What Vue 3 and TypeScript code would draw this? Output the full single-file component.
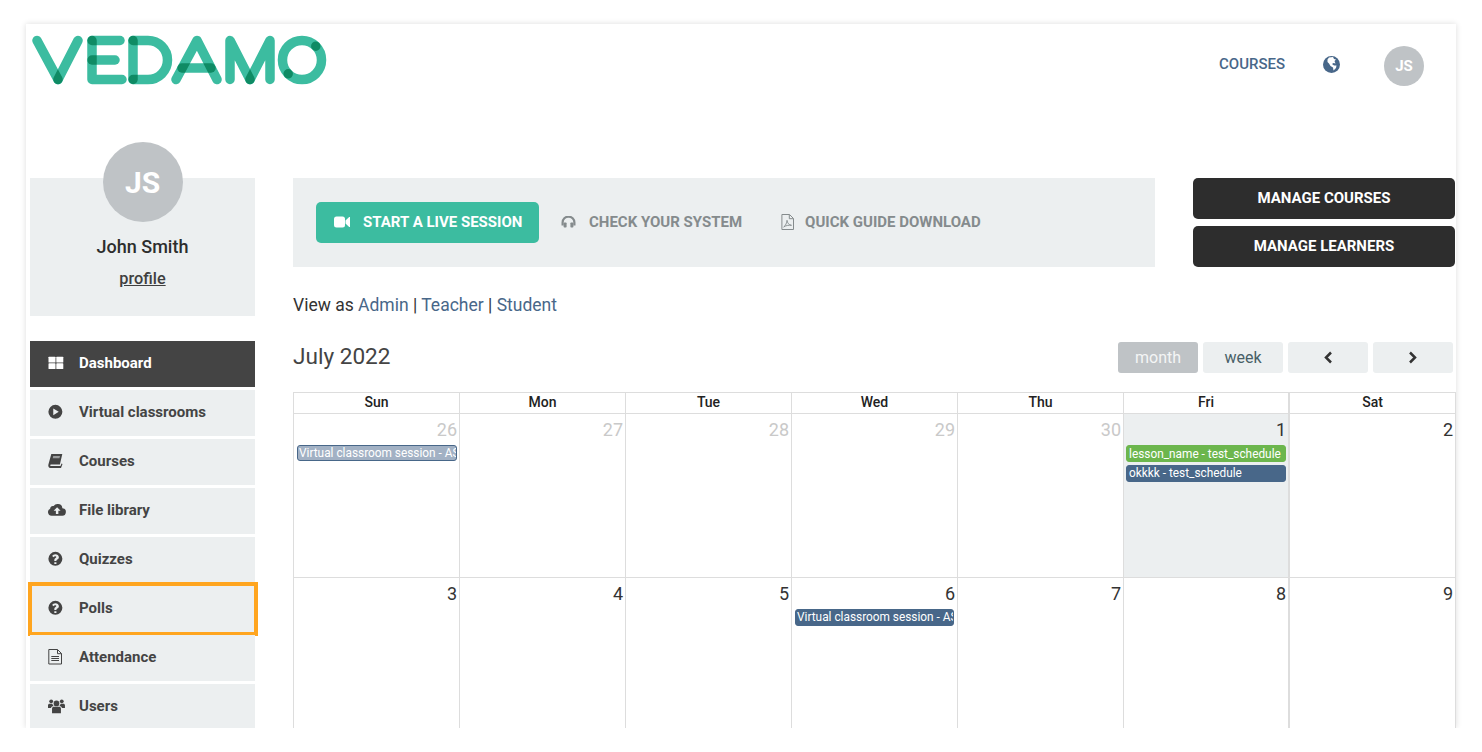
<script setup lang="ts">
interface NavItem { label: string; icon: string; active?: boolean; highlight?: boolean }
interface CalEvent { text: string; kind: string }
interface Day { n: number; muted?: boolean; today?: boolean; events?: CalEvent[] }

const nav: NavItem[] = [
  { label: 'Dashboard', icon: 'grid', active: true },
  { label: 'Virtual classrooms', icon: 'play' },
  { label: 'Courses', icon: 'book' },
  { label: 'File library', icon: 'cloud' },
  { label: 'Quizzes', icon: 'question' },
  { label: 'Polls', icon: 'question', highlight: true },
  { label: 'Attendance', icon: 'file' },
  { label: 'Users', icon: 'users' },
]
const dows = ['Sun', 'Mon', 'Tue', 'Wed', 'Thu', 'Fri', 'Sat']
const days: Day[] = [
  { n: 26, muted: true, events: [{ text: 'Virtual classroom session - ASDF', kind: 'faded long' }] },
  { n: 27, muted: true },
  { n: 28, muted: true },
  { n: 29, muted: true },
  { n: 30, muted: true },
  { n: 1, today: true, events: [
    { text: 'lesson_name - test_schedule', kind: 'green' },
    { text: 'okkkk - test_schedule', kind: 'blue' },
  ] },
  { n: 2 },
  { n: 3 }, { n: 4 }, { n: 5 },
  { n: 6, events: [{ text: 'Virtual classroom session - ASDF', kind: 'blue long' }] },
  { n: 7 }, { n: 8 }, { n: 9 },
]
</script>

<template>
  <div class="frame">
    <header class="top">
      <svg class="logo" width="300" height="56" viewBox="0 0 300 56" fill="none" stroke="#3cbca0" stroke-linecap="round" stroke-linejoin="round" stroke-width="9.5">
        <path d="M5 8.500 L26 47.500" />
        <path d="M46 8.500 L26 47.500" />
        <path d="M60 8.500 V47.500 H90" />
        <path d="M60 8.500 H88" />
        <path d="M60 28 H83" />
        <path d="M101 8.500 V47.500" />
        <path d="M101 8.500 H116 A19.500 19.500 0 0 1 116 47.500 H101" />
        <path d="M144 47.500 L165 8.500 L185 47.500" />
        <path d="M150 36 H179" />
        <path d="M198 47.500 V8.500 L218 47.500" />
        <path d="M218 47.500 L238 8.500 V47.500" />
        <path d="M283.800 14.200 A19.500 19.500 0 0 1 256.200 41.800" />
        <path d="M256.200 41.800 A19.500 19.500 0 0 1 283.800 14.200" />
      </svg>
      <nav class="topnav">
        <a class="courses">COURSES</a>
        <svg class="globe" width="17" height="17" viewBox="0 0 17 17">
          <circle cx="8.5" cy="8.5" r="8.5" fill="#486789" />
          <path d="M6 1.5 L10 .9 L11 3 L13 3.5 L11.5 5 L12.5 7.5 L10.5 7 L9 8 L11 9.5 L13.5 9.5 L13 12 L10.5 14.5 L10 11.5 L7.5 10 L6 7.5 L4.5 6 L4.5 3.5 Z" fill="#fff" />
        </svg>
        <span class="avatar small">JS</span>
      </nav>
    </header>

    <div class="body">
      <aside class="side">
        <section class="profile">
          <span class="avatar big">JS</span>
          <div class="name">John Smith</div>
          <a class="profile-link">profile</a>
        </section>
        <ul class="menu">
          <li v-for="item in nav" :key="item.label" class="menu-item" :class="{ active: item.active, hl: item.highlight }">
            <svg class="mi" width="16" height="16" viewBox="0 0 16 16">
              <g v-if="item.icon === 'grid'" fill="currentColor">
                <rect x="0.5" y="1.700" width="7" height="5.800" rx=".6" />
                <rect x="8.300" y="1.700" width="7" height="5.800" rx=".6" />
                <rect x="0.5" y="8.300" width="7" height="5.800" rx=".6" />
                <rect x="8.300" y="8.300" width="7" height="5.800" rx=".6" />
              </g>
              <path v-else-if="item.icon === 'play'" transform="translate(-1.100 -.4) scale(1.060)" fill="currentColor" fill-rule="evenodd" d="M8 1.2a6.6 6.6 0 1 1 0 13.2A6.6 6.6 0 0 1 8 1.2ZM6 4.7v6.2l5.2-3.1Z" />
              <g v-else-if="item.icon === 'book'">
                <path fill="currentColor" d="M3.300 1H14.300L11.900 11.500H3C2 11.500 1.800 13 3 13H12.500L13.500 10.500 14.500 11 13 15H2.500C.5 15 0 13 .4 11.500Z" />
                <path fill="#9a9c9d" d="M5.200 3H12L11.500 5.300H4.700Z" />
              </g>
              <path v-else-if="item.icon === 'cloud'" transform="translate(-.4 -.8) scale(1.120)" fill="currentColor" fill-rule="evenodd" d="M9.300 2.600a4.100 4.100 0 0 1 3.900 3.600A3.300 3.300 0 0 1 12.600 13H3.500A3.300 3.300 0 0 1 2.300 6.700 2.400 2.400 0 0 1 5.400 4.300 4.100 4.100 0 0 1 9.300 2.600ZM8.500 5.400 5.400 8.600h2v2.900h2.200V8.600h2Z" />
              <path v-else-if="item.icon === 'question'" transform="translate(-1.100 -.4) scale(1.060)" fill="currentColor" fill-rule="evenodd" d="M8 1.200a6.600 6.600 0 1 1 0 13.200A6.600 6.600 0 0 1 8 1.200ZM7 10.900v1.700h2v-1.700ZM8.100 3.500c-1.500 0-2.500.7-3.100 1.700l1.300 1c.4-.5.8-.9 1.500-.9.6 0 1.100.3 1.100.8 0 .4-.3.6-.8.9C7.500 7.500 7 8 7 9v.9h2v-.6c0-.4.3-.6.800-.9.8-.5 1.500-1 1.500-2.200 0-1.700-1.700-2.700-3.200-2.700Z" />
              <g v-else-if="item.icon === 'file'">
                <path fill="none" stroke="currentColor" stroke-width="1" d="M.8 .5H9.500L13.500 4.500V15H.8Z M9.500 .7V4.700H13.500" />
                <path fill="none" stroke="currentColor" stroke-width="1" d="M3.300 7.500H11M3.300 9.500H11M3.300 11.500H11" />
              </g>
              <g v-else fill="currentColor" transform="translate(0 -.6) scale(1.060)">
                <circle cx="8" cy="5.700" r="2.700" />
                <circle cx="3" cy="3.700" r="1.800" />
                <circle cx="13" cy="3.700" r="1.800" />
                <path d="M3.800 15V10.500C3.800 9.300 4.700 8.800 5.600 8.800H10.400C11.300 8.800 12.200 9.300 12.200 10.500V15Z" />
                <path d="M0 10V7.500C0 6.500.7 6 1.500 6H4C4.300 7 4.800 7.600 5.300 8 3.700 8.200 3 9 2.900 10ZM16 10V7.500C16 6.500 15.300 6 14.500 6H12C11.700 7 11.200 7.600 10.700 8 12.300 8.200 13 9 13.100 10Z" />
              </g>
            </svg>
            <span>{{ item.label }}</span>
          </li>
        </ul>
      </aside>

      <main class="main">
        <div class="actions-row">
          <div class="action-bar">
            <button class="start">
              <svg width="16" height="12" viewBox="0 0 16 12" fill="#fff"><rect x="0" y=".5" width="11" height="11" rx="2.500" /><path d="M11.500 4.500 15.200 1H16V11H15.200L11.500 7.500Z" /></svg>
              START A LIVE SESSION
            </button>
            <a class="act check">
              <svg width="15" height="12" viewBox="0 0 15 12" fill="none"><path d="M1.600 9.500V6.500a5.900 5.900 0 0 1 11.800 0v3" stroke="#858b8d" stroke-width="2.200" /><rect x="2.600" y="6.500" width="3" height="5" rx=".8" fill="#858b8d" /><rect x="9.400" y="6.500" width="3" height="5" rx=".8" fill="#858b8d" /></svg>
              CHECK YOUR SYSTEM
            </a>
            <a class="act guide">
              <svg width="13" height="16" viewBox="0 0 13 16" fill="none" stroke="#858b8d"><path d="M.9.500H8.500L12.500 4.500V15.500H.9Z M8.300.700V4.700H12.300" /><path d="M2.700 13C4.500 11.800 6 8.500 6 6.300 6.300 9 8 11 10.500 11.300 8 11 4.500 11.500 2.700 13Z" stroke-width=".9" /></svg>
              QUICK GUIDE DOWNLOAD
            </a>
          </div>
          <div class="manage">
            <button>MANAGE COURSES</button>
            <button>MANAGE LEARNERS</button>
          </div>
        </div>

        <p class="view-as">View as <a>Admin</a> | <a>Teacher</a> | <a>Student</a></p>

        <div class="cal-head">
          <h2>July 2022</h2>
          <div class="cal-btns">
            <button class="on">month</button>
            <button>week</button>
            <button aria-label="previous"><svg width="10" height="13" viewBox="0 0 10 13" fill="none"><path d="M8 1.500 3 6.500 8 11.500" stroke="#333" stroke-width="2.500" /></svg></button>
            <button aria-label="next"><svg width="10" height="13" viewBox="0 0 10 13" fill="none"><path d="M2 1.500 7 6.500 2 11.500" stroke="#333" stroke-width="2.500" /></svg></button>
          </div>
        </div>

        <div class="cal">
          <div v-for="d in dows" :key="d" class="dow">{{ d }}</div>
          <div v-for="(day, i) in days" :key="i" class="cell" :class="{ today: day.today }">
            <div class="num" :class="{ muted: day.muted }">{{ day.n }}</div>
            <div v-for="ev in day.events" :key="ev.text" class="ev" :class="ev.kind">{{ ev.text }}</div>
          </div>
        </div>
      </main>
    </div>
  </div>
</template>

<style>
html, body { background: #fff; overflow: hidden; }
</style>

<style scoped>
* { box-sizing: border-box; }
.frame {
  width: 1430px; height: 704px; margin: 24px 0 0 26px; background: #fff; overflow: hidden;
  box-shadow: 0 0 6px rgba(0, 0, 0, .14);
  font-family: Roboto, "Liberation Sans", sans-serif; color: #333;
}
.top { height: 118px; display: flex; justify-content: space-between; padding: 4px 32px 0 6px; }
.logo { display: block; margin: 4px 0 0 0; isolation: isolate; }
.logo path { mix-blend-mode: multiply; }
.topnav { display: flex; align-items: flex-start; padding-top: 22px; }
.courses { font-size: 15px; font-weight: 500; color: #486789; line-height: 17px; margin-top: 6px; width: 104px; }
.globe { margin-top: 6px; width: 17px; }
.avatar { display: flex; align-items: center; justify-content: center; border-radius: 50%; background: #bfc3c6; color: #fff; font-weight: 700; }
.avatar.small { width: 40px; height: 40px; font-size: 15px; margin: -4px 0 0 44px; }
.avatar.big { width: 80px; height: 80px; font-size: 30px; margin: -36px auto 0; }
.body { display: flex; padding-left: 4px; }
.side { width: 225px; padding-top: 36px; flex: none; }
.profile { background: #eceff0; height: 138px; text-align: center; display: flow-root; }
.name { font-size: 18px; font-weight: 500; line-height: 22px; margin-top: 14px; color: #2d2d2d; }
.profile-link { display: block; font-size: 16.3px; font-weight: 500; line-height: 20px; margin-top: 11px; color: #3f3f3f; text-decoration: underline; }
.menu { list-style: none; margin: 25px 0 0; padding: 0; display: flex; flex-direction: column; gap: 3px; }
.menu-item {
  position: relative; height: 46px; background: #eceff0; display: flex; align-items: center;
  padding: 0 0 3px 18px; font-size: 15px; font-weight: 700; color: #444;
}
.menu-item.active { background: #444; color: #fff; }
.mi { flex: none; margin-right: 15px; overflow: visible; }
.menu-item.hl::after { content: ""; position: absolute; left: -2px; right: -3px; top: -4px; bottom: -4px; border: 4px solid #ffa51f; }
.main { width: 1162px; margin-left: 38px; padding-top: 36px; flex: none; }
.actions-row { display: flex; justify-content: space-between; }
.action-bar { width: 862px; height: 89px; background: #eceff0; display: flex; align-items: center; padding-left: 23px; }
.start {
  width: 223px; height: 41px; border: 0; border-radius: 5px; background: #3cbca0; color: #fff;
  display: flex; align-items: center; gap: 13px; padding: 0 0 2px 18px; font: 700 15px Roboto, sans-serif; white-space: nowrap;
}
.act { display: flex; align-items: center; gap: 13px; font-size: 15px; font-weight: 700; color: #858b8d; white-space: nowrap; padding-bottom: 2px; }
.check { margin-left: 22px; }
.guide { margin-left: 39px; gap: 11px; }
.manage { width: 262px; display: flex; flex-direction: column; gap: 7px; }
.manage button { height: 41px; border: 0; border-radius: 5px; background: #2d2d2d; color: #fff; font: 700 15px Roboto, sans-serif; padding: 0 0 2px; }
.view-as { margin: 27px 0 0; font-size: 17.5px; line-height: 22px; color: #333; }
.view-as a { color: #486789; }
.cal-head { display: flex; justify-content: space-between; align-items: flex-start; margin-top: 26px; width: 1160px; }
.cal-head h2 { margin: 0; font-size: 22.6px; font-weight: 400; line-height: 28px; color: #444; padding-top: 1px; }
.cal-btns { display: flex; gap: 5px; margin-top: 0; }
.cal-btns button { width: 80px; height: 31px; border: 0; border-radius: 3px; background: #eceff0; color: #486067; font: 400 16px Roboto, sans-serif; display: flex; align-items: center; justify-content: center; padding: 0 0 1px; }
.cal-btns button.on { background: #bfc3c6; color: #f4f5f5; }
.cal { display: grid; grid-template-columns: repeat(7, 166px); grid-template-rows: 21px 164px 164px; width: 1163px; margin-top: 19px; border-top: 1px solid #ddd; border-left: 1px solid #ddd; }
.dow { border-right: 1px solid #ddd; border-bottom: 1px solid #ddd; font-size: 14px; font-weight: 500; text-align: center; line-height: 19px; color: #222; }
.cell { border-right: 1px solid #ddd; border-bottom: 1px solid #ddd; padding: 5px 2px 0; }
.dow:nth-child(7n+6), .cell:nth-child(7n+6) { border-right-width: 2px; }
.cell.today { background: #eceff0; }
.num { text-align: right; font-size: 18px; line-height: 22px; color: #333; margin-bottom: 4px; }
.num.muted { color: #c9c9c9; }
.ev { height: 17px; line-height: 15px; font-size: 11.85px; color: #fff; padding: 0 2px; border-radius: 3px; border: 1px solid #486789; background: #486789; white-space: nowrap; overflow: hidden; margin-bottom: 3px; }
.ev.long { margin: 1px 0 0 1px; padding-left: 1px; }
.ev.blue.long { margin-right: 1px; }
.ev.green { background: #6cb64d; border-color: #6cb64d; line-height: 16px; }
.ev.faded { background: #a2b1c4; height: 16px; margin-top: 2px; }
</style>
